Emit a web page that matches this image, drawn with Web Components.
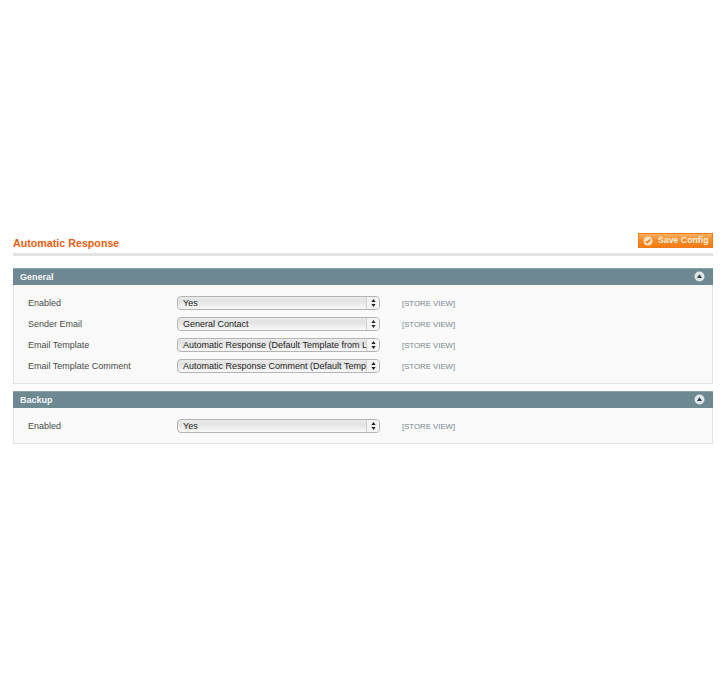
<!DOCTYPE html>
<html>
<head>
<meta charset="utf-8">
<title>Automatic Response</title>
<style>
  html, body { margin: 0; background: #fff; }
  body { font-family: "Liberation Sans", Arial, sans-serif; font-size: 9px; color: #444; }
</style>
</head>
<body>
<config-page>
  <config-header title="Automatic Response"></config-header>
  <config-section title="General">
    <config-row label="Enabled" value="Yes"></config-row>
    <config-row label="Sender Email" value="General Contact"></config-row>
    <config-row label="Email Template" value="Automatic Response (Default Template from L"></config-row>
    <config-row label="Email Template Comment" value="Automatic Response Comment (Default Temp"></config-row>
  </config-section>
  <config-section title="Backup">
    <config-row label="Enabled" value="Yes"></config-row>
  </config-section>
</config-page>

<script>
class ConfigPage extends HTMLElement {
  constructor() {
    super();
    this.attachShadow({ mode: 'open' });
    this.shadowRoot.innerHTML = `
      <style>
        :host {
          display: flex;
          flex-direction: column;
          gap: 7px;
          box-sizing: border-box;
          width: 725px;
          height: 680px;
          padding: 233px 12px 0 13px;
          background: #fff;
        }
      </style>
      <slot></slot>
    `;
  }
}

class ConfigHeader extends HTMLElement {
  constructor() {
    super();
    this.attachShadow({ mode: 'open' });
    this.shadowRoot.innerHTML = `
      <style>
        :host {
          display: flex;
          justify-content: space-between;
          align-items: flex-start;
          box-sizing: border-box;
          height: 23px;
          margin-bottom: 5px;
          border-bottom: 3px solid #e3e3e3;
        }
        h3 {
          margin: 3px 0 0;
          font-size: 10.7px;
          line-height: 14px;
          font-weight: bold;
          color: #eb5e13;
        }
        button {
          display: flex;
          align-items: center;
          gap: 5px;
          box-sizing: border-box;
          width: 75px;
          height: 15px;
          padding: 0 0 0 4px;
          border: 1px solid #ed7a1c;
          background: linear-gradient(#fbb162, #f68a26 50%, #f47c14);
          color: #fdeedd;
          font: bold 8.75px/13px "Liberation Sans", Arial, sans-serif;
          white-space: nowrap;
        }
        svg { flex: none; }
      </style>
      <h3></h3>
      <button type="button">
        <svg width="10" height="10" viewBox="0 0 10 10">
          <circle cx="5" cy="5" r="4.5" fill="#fde3c4"/>
          <path d="M2.8 5.1 4.4 6.7 7.3 3.5" fill="none" stroke="#ef7a12" stroke-width="1.5"/>
        </svg>
        <span>Save Config</span>
      </button>
    `;
  }

  connectedCallback() {
    this.shadowRoot.querySelector('h3').textContent = this.getAttribute('title');
  }
}

class ConfigSection extends HTMLElement {
  constructor() {
    super();
    this.attachShadow({ mode: 'open' });
    this.shadowRoot.innerHTML = `
      <style>
        :host { display: block; }
        .head {
          display: flex;
          justify-content: space-between;
          align-items: center;
          box-sizing: border-box;
          height: 17px;
          padding: 0 8px 1px 7px;
          background: #6f8992;
          border-top: 1px solid #8ea2a9;
          color: #f4f6f7;
          font-size: 9px;
          font-weight: bold;
        }
        .body {
          display: flex;
          flex-direction: column;
          gap: 7px;
          padding: 11px 0 10px 14px;
          background: #fafafa;
          border: 1px solid #e2e2e2;
          border-top: 0;
        }
        svg { display: block; }
      </style>
      <div class="head">
        <span class="title"></span>
        <svg width="11" height="11" viewBox="0 0 11 11">
          <circle cx="5.5" cy="5.5" r="5" fill="#dfe6e8"/>
          <path d="M5.5 3.2 8 7H3z" fill="#2f3f46"/>
        </svg>
      </div>
      <div class="body"><slot></slot></div>
    `;
  }

  connectedCallback() {
    this.shadowRoot.querySelector('.title').textContent = this.getAttribute('title');
  }
}

class ConfigRow extends HTMLElement {
  constructor() {
    super();
    this.attachShadow({ mode: 'open' });
    this.shadowRoot.innerHTML = `
      <style>
        :host {
          display: grid;
          grid-template-columns: 149px 203px auto;
          align-items: center;
          height: 14px;
          font-size: 9px;
          color: #4a4a4a;
        }
        .label { white-space: nowrap; }
        .select {
          display: flex;
          align-items: center;
          box-sizing: border-box;
          height: 14px;
          border: 1px solid #b4b4b4;
          border-radius: 4px;
          background: linear-gradient(#ececec, #e2e2e2 30%, #f8f8f8);
          color: #222;
        }
        .value {
          flex: 1;
          min-width: 0;
          padding: 0 0 0 5px;
          white-space: nowrap;
        }
        .arrows {
          flex: none;
          display: flex;
          align-items: center;
          justify-content: center;
          box-sizing: border-box;
          width: 13px;
          height: 12px;
          border-left: 1px solid #cfcfcf;
          background: #f4f4f4;
          border-radius: 0 3px 3px 0;
        }
        .scope { margin-left: 22px; font-size: 7.8px; color: #78868c; white-space: nowrap; }
      </style>
      <span class="label"></span>
      <div class="select">
        <span class="value"></span>
        <span class="arrows">
          <svg width="5" height="8" viewBox="0 0 5 8">
            <path d="M2.5 0 4.6 3H.4zM2.5 8 .4 5H4.6z" fill="#222"/>
          </svg>
        </span>
      </div>
      <span class="scope">[STORE VIEW]</span>
    `;
  }

  connectedCallback() {
    this.shadowRoot.querySelector('.label').textContent = this.getAttribute('label');
    this.shadowRoot.querySelector('.value').textContent = this.getAttribute('value');
  }
}

customElements.define('config-page', ConfigPage);
customElements.define('config-header', ConfigHeader);
customElements.define('config-section', ConfigSection);
customElements.define('config-row', ConfigRow);
</script>
</body>
</html>
